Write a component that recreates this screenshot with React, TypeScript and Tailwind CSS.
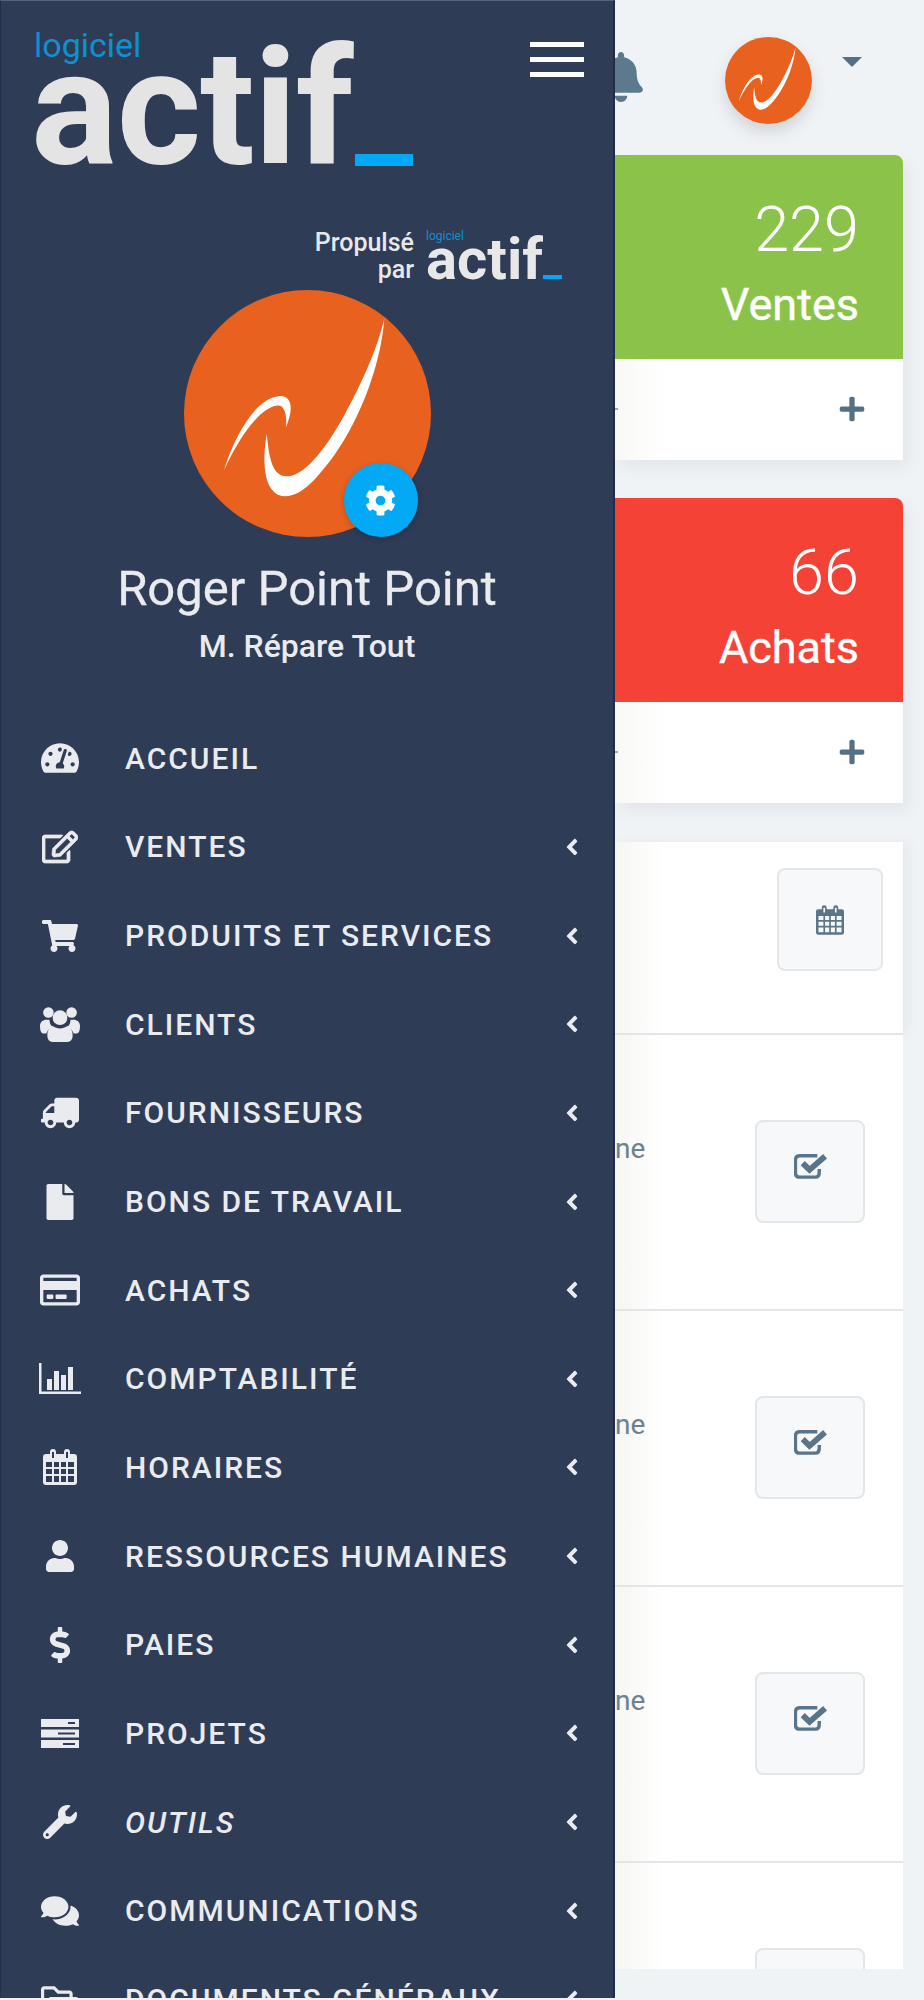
import React from "react";
import { FaAngleLeft, FaBell, FaCog, FaComments, FaDollarSign, FaFile, FaPlus, FaRegCreditCard, FaRegEdit, FaRegFolderOpen, FaShoppingCart, FaTachometerAlt, FaTruck, FaUser, FaWrench } from "react-icons/fa";

const Swoosh = () => (
  <svg viewBox="0 0 740 740" className="w-full h-full">
    <circle cx="370" cy="370" r="370" fill="#e8611f" />
    <path fill="#fff" d="M600 85C592 215 530 385 450 495C400 562 355 617 303 618C258 619 226 560 248 430C254 500 264 562 312 558C368 553 432 462 482 372C532 282 582 170 600 85Z" />
    <path fill="#fff" d="M120 540C150 440 215 322 285 318C320 316 332 350 305 412C310 372 300 344 280 346C225 352 160 450 120 540Z" />
  </svg>
);

const Users = () => (
  <svg viewBox="0 0 38 34" className="w-[40px] h-[36px]" fill="currentColor">
    <circle cx="8" cy="6" r="5" /><circle cx="30" cy="6" r="5" /><circle cx="19" cy="11" r="7" />
    <path d="M0 19c0-4 3-6 6-6h3c0 3 1 5 3 7-3 1-5 3-6 6H3c-2 0-3-3-3-7ZM38 19c0-4-3-6-6-6h-3c0 3-1 5-3 7 3 1 5 3 6 6h3c2 0 3-3 3-7Z" />
    <path d="M12 19c4 3 10 3 14 0 3 1 5 4 5 9 0 4-2 6-5 6H12c-3 0-5-2-5-6 0-5 2-8 5-9Z" />
  </svg>
);

const Chart = () => (
  <svg viewBox="0 0 42 32" className="w-[42px] h-[32px]" fill="currentColor">
    <path d="M0 0h2.500v28.500H42V31H0Z" /><rect x="8" y="16" width="5" height="11" /><rect x="15" y="8" width="5" height="19" /><rect x="22" y="12" width="5" height="15" /><rect x="29" y="4" width="5" height="23" />
  </svg>
);

const Calendar = ({ className }: { className: string }) => (
  <svg viewBox="0 0 34 36" className={className} fill="currentColor">
    <path fillRule="evenodd" d="M3 5h4V3a3 3 0 0 1 6 0v2h8V3a3 3 0 0 1 6 0v2h4c2 0 3 1 3 3v25c0 2-1 3-3 3H3c-2 0-3-1-3-3V8c0-2 1-3 3-3ZM3 13v5h6v-5Zm8 0v5h5v-5Zm7 0v5h5v-5Zm7 0v5h6v-5ZM3 20v5h6v-5Zm8 0v5h5v-5Zm7 0v5h5v-5Zm7 0v5h6v-5ZM3 27v6h6v-6Zm8 0v6h5v-6Zm7 0v6h5v-6Zm7 0v6h6v-6ZM9 3v6h2V3Zm14 0v6h2V3Z" />
  </svg>
);

const Server = () => (
  <svg viewBox="0 0 38 29" className="w-[38px] h-[29px]" fill="currentColor">
    <path fillRule="evenodd" d="M0 0h38v8H0Zm27 3v2h7V3ZM0 10.500h38v8H0Zm17 3v2h17v-2ZM0 21h38v8H0Zm22 3v2h12v-2Z" />
  </svg>
);

const CheckSq = () => (
  <svg viewBox="0 0 34 26" className="w-[33px] h-[26px]" fill="none" stroke="#5a7489">
    <path strokeWidth="3.500" d="M26 16v4c0 3-1 4.500-4 4.500H6c-3 0-4.500-1.500-4.500-4.500V7c0-3 1.500-4.500 4.500-4.500h18" />
    <path strokeWidth="6" d="M9 10l7 7L32 3" />
  </svg>
);

const items: [string, React.ReactNode, boolean?, boolean?][] = [
  ["ACCUEIL", <FaTachometerAlt size={38} />, false],
  ["VENTES", <FaRegEdit size={36} className="[stroke:currentColor] [stroke-width:12px]" />, true],
  ["PRODUITS ET SERVICES", <FaShoppingCart size={36} />, true],
  ["CLIENTS", <Users />, true],
  ["FOURNISSEURS", <FaTruck size={38} className="-scale-x-100" />, true],
  ["BONS DE TRAVAIL", <FaFile size={36} />, true],
  ["ACHATS", <FaRegCreditCard size={40} />, true],
  ["COMPTABILITÉ", <Chart />, true],
  ["HORAIRES", <Calendar className="w-[34px] h-[36px]" />, true],
  ["RESSOURCES HUMAINES", <FaUser size={32} />, true],
  ["PAIES", <FaDollarSign size={36} />, true],
  ["PROJETS", <Server />, true],
  ["OUTILS", <FaWrench size={34} />, true, true],
  ["COMMUNICATIONS", <FaComments size={38} />, true],
  ["DOCUMENTS GÉNÉRAUX", <FaRegFolderOpen size={38} />, true],
];

const Stat = ({ n, label, bg }: { n: string; label: string; bg: string }) => (
  <div className="shadow-[6px_8px_14px_rgba(60,70,90,0.07)]">
    <div className={`${bg} h-[204px] rounded-tr-[8px] flex flex-col items-end pr-[44px] text-white`}>
      <div className="text-[63px] font-light leading-[70px] mt-[40px]">{n}</div>
      <div className="text-[45px] font-normal leading-[50px] mt-[15px] [-webkit-text-stroke:0.4px_white]">{label}</div>
    </div>
    <div className="bg-white h-[101px] flex items-center justify-between bg-gradient-to-r from-[#f8f8f6] to-[#ffffff] to-[50px] pr-[37px] pb-[2px]">
      <span className="w-[3px] h-[2px] bg-[#9aa8b2]" />
      <FaPlus size={28} className="text-[#557085]" />
    </div>
  </div>
);

const Row = () => (
  <div className="h-[276px] border-b-2 border-[#e3e6e8] flex items-start justify-between bg-gradient-to-r from-[#f6f6f3] to-[#ffffff] to-[50px] pr-[38px]">
    <span className="text-[28px] leading-[30px] text-[#6c8290] mt-[99px] w-[40px] overflow-hidden whitespace-nowrap">ne</span>
    <button className="w-[110px] h-[103px] mt-[85px] rounded-[8px] border-2 border-[#e3e7ea] bg-[#f6f8f9] flex items-center justify-center pb-[11px]"><CheckSq /></button>
  </div>
);

export default function App() {
  return (
    <div className="flex h-[2000px] w-[924px] overflow-hidden bg-[#f0f3f6] font-['Roboto',sans-serif]">
      <aside className="w-[615px] shrink-0 h-[1998px] overflow-hidden bg-[#2f3c56] border-l border-t border-r-2 border-l-[#22304d] border-t-[#5a6478] border-r-[#1f2d4a] text-[#e9ebef] z-10">
        <div className="flex justify-between items-start h-[228px]">
          <div className="pl-[30px] pt-[31px] flex flex-col">
            <div className="ml-[3px] text-[34px] leading-[26px] text-[#0f90d2] font-normal">logiciel</div>
            <div className="flex items-end">
              <span className="text-[162px] font-bold leading-[100px] tracking-[-1px] text-[#e4e4e4]">actif</span>
              <span className="ml-[2px] w-[58px] h-[12px] bg-[#03a9f4] -mb-[8px]" />
            </div>
          </div>
          <div className="mt-[41px] mr-[29px] flex flex-col gap-[10px]">
            <span className="block w-[54px] h-[5px] bg-white" /><span className="block w-[54px] h-[5px] bg-white" /><span className="block w-[54px] h-[5px] bg-white" />
          </div>
        </div>
        <div className="flex justify-end pr-[51px] gap-[12px] h-[61px]">
          <div className="text-[25px] leading-[27px] font-medium text-right text-[#e8e8e8]">Propulsé<br />par</div>
          <div className="flex flex-col pt-[3px]">
            <div className="text-[12px] leading-[9px] text-[#0f90d2]">logiciel</div>
            <div className="flex items-end">
              <span className="text-[58px] leading-[36px] font-bold text-[#e8e8e8]">actif</span>
              <span className="w-[19px] h-[4px] bg-[#03a9f4] -mb-[2px]" />
            </div>
          </div>
        </div>
        <div className="relative mx-auto w-[247px] h-[247px]">
          <Swoosh />
          <div className="absolute left-[160px] top-[173px] w-[74px] h-[74px] rounded-full bg-[#03a9f4] flex items-center justify-center shadow-[0_2px_6px_rgba(0,0,0,0.2)]"><FaCog size={31} className="text-white" /></div>
        </div>
        <div className="text-center text-[49px] leading-[56px] mt-[24px] font-normal [-webkit-text-stroke:0.3px_#e9ebef]">Roger Point Point</div>
        <div className="text-center text-[32px] leading-[36px] mt-[11px] font-medium">M. Répare Tout</div>
        <nav className="mt-[50px]">
          {items.map(([label, icon, chev, it]) => (
            <div key={label} className="h-[88.65px] flex items-center">
              <div className="w-[124px] shrink-0 flex justify-center pr-[7px]">{icon}</div>
              <span className={`flex-1 text-[30px] font-medium tracking-[2px] whitespace-nowrap ${it ? "italic" : ""}`}>{label}</span>
              {chev && <FaAngleLeft size={26} className="mr-[28px] shrink-0" />}
            </div>
          ))}
        </nav>
      </aside>
      <main className="flex-1 min-w-0 overflow-hidden pr-[21px]">
        <div className="h-[155px] flex items-start">
          <FaBell size={50} className="text-[#5c7a8c] -ml-[19px] mt-[52px] shrink-0" />
          <div className="ml-[79px] mt-[37px] w-[87px] h-[87px] rounded-full shadow-[0_8px_16px_rgba(60,70,90,0.18)] shrink-0"><Swoosh /></div>
          <div className="ml-[30px] mt-[57px] w-0 h-0 border-x-[10px] border-x-transparent border-t-[10px] border-t-[#557085] shrink-0" />
        </div>
        <Stat n="229" label="Ventes" bg="bg-[#8bc34a]" />
        <div className="h-[38px]" />
        <Stat n="66" label="Achats" bg="bg-[#f44336]" />
        <div className="h-[39px]" />
        <div className="h-[193px] bg-white border-b-2 border-[#e3e6e8] flex justify-end bg-gradient-to-r from-[#f6f6f3] to-[#ffffff] to-[50px] pr-[20px] shadow-[6px_0_10px_rgba(60,70,90,0.05)]">
          <button className="w-[106px] h-[103px] mt-[26px] rounded-[8px] border-2 border-[#e3e7ea] bg-[#f6f8f9] flex items-center justify-center"><Calendar className="w-[28px] h-[30px] text-[#5a7489]" /></button>
        </div>
        <Row /><Row /><Row />
        <div className="h-[106px] flex justify-end overflow-hidden bg-gradient-to-r from-[#f6f6f3] to-[#ffffff] to-[50px] pr-[38px]">
          <div className="w-[110px] h-[103px] mt-[85px] rounded-[8px] border-2 border-[#e3e7ea] bg-[#f6f8f9] shrink-0" />
        </div>
      </main>
    </div>
  );
}
